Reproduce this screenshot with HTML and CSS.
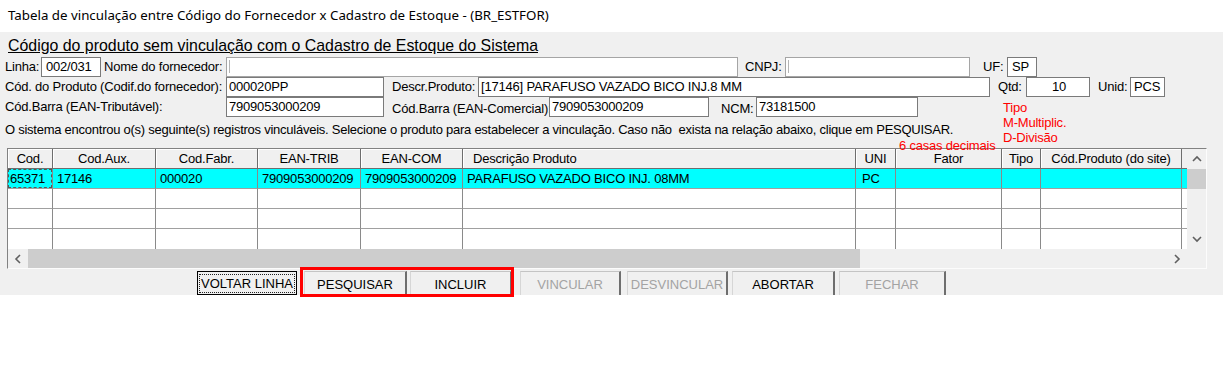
FILE: index.html
```html
<!DOCTYPE html>
<html lang="pt-BR">
<head>
    <meta charset="UTF-8">
    <title>BR_ESTFOR</title>
    <link rel="stylesheet" href="styles.css">
</head>
<body>
    <div class="titlebar">Tabela de vinculação entre Código do Fornecedor x Cadastro de Estoque - (BR_ESTFOR)</div>

    <div class="panel">
        <div class="heading">Código do produto sem vinculação com o Cadastro de Estoque do Sistema</div>

        <div class="form-row">
            <span class="lbl w-linha">Linha:</span>
            <span class="fld f-linha">002/031</span>
            <span class="lbl w-nome">Nome do fornecedor:</span>
            <span class="fld soft f-nome"><i class="caret"></i></span>
            <span class="lbl w-cnpj">CNPJ:</span>
            <span class="fld soft f-cnpj"><i class="caret"></i></span>
            <span class="lbl w-uf">UF:</span>
            <span class="fld f-uf">SP</span>
        </div>

        <div class="form-row">
            <span class="lbl w-first">Cód. do Produto (Codif.do fornecedor):</span>
            <span class="fld f-cod">000020PP</span>
            <span class="lbl w-descr">Descr.Produto:</span>
            <span class="fld f-descr">[17146] PARAFUSO VAZADO BICO INJ.8 MM</span>
            <span class="lbl w-qtd">Qtd:</span>
            <span class="fld f-qtd">10</span>
            <span class="lbl w-unid">Unid:</span>
            <span class="fld f-unid">PCS</span>
        </div>

        <div class="form-row">
            <span class="lbl w-first">Cód.Barra (EAN-Tributável):</span>
            <span class="fld f-cod">7909053000209</span>
            <span class="lbl w-eancom low">Cód.Barra (EAN-Comercial):</span>
            <span class="fld f-eancom">7909053000209</span>
            <span class="lbl w-ncm low">NCM:</span>
            <span class="fld f-ncm">73181500</span>
        </div>

        <p class="info">O sistema encontrou o(s) seguinte(s) registros vinculáveis. Selecione o produto para estabelecer a vinculação. Caso não&nbsp; exista na relação abaixo, clique em PESQUISAR.</p>

        <div class="note note-tipo">Tipo<br>M-Multiplic.<br>D-Divisão</div>
        <div class="note note-dec">6 casas decimais</div>

        <div class="grid-frame">
            <div class="grid-body">
                <div class="grid-table" id="grid">
                    <div class="hd">Cod.</div>
                    <div class="hd">Cod.Aux.</div>
                    <div class="hd">Cod.Fabr.</div>
                    <div class="hd">EAN-TRIB</div>
                    <div class="hd">EAN-COM</div>
                    <div class="hd left">Descrição Produto</div>
                    <div class="hd">UNI</div>
                    <div class="hd">Fator</div>
                    <div class="hd">Tipo</div>
                    <div class="hd">Cód.Produto (do site)</div>
                    <div class="hd end"></div>

                    <div class="cell sel first"><span class="focus">65371</span></div>
                    <div class="cell sel">17146</div>
                    <div class="cell sel">000020</div>
                    <div class="cell sel">7909053000209</div>
                    <div class="cell sel">7909053000209</div>
                    <div class="cell sel">PARAFUSO VAZADO BICO INJ. 08MM</div>
                    <div class="cell sel uni">PC</div>
                    <div class="cell sel"></div>
                    <div class="cell sel"></div>
                    <div class="cell sel"></div>
                    <div class="cell sel end"></div>

                    <div class="cell"></div><div class="cell"></div><div class="cell"></div><div class="cell"></div><div class="cell"></div><div class="cell"></div><div class="cell"></div><div class="cell"></div><div class="cell"></div><div class="cell"></div><div class="cell end"></div>
                    <div class="cell"></div><div class="cell"></div><div class="cell"></div><div class="cell"></div><div class="cell"></div><div class="cell"></div><div class="cell"></div><div class="cell"></div><div class="cell"></div><div class="cell"></div><div class="cell end"></div>
                    <div class="cell last"></div><div class="cell last"></div><div class="cell last"></div><div class="cell last"></div><div class="cell last"></div><div class="cell last"></div><div class="cell last"></div><div class="cell last"></div><div class="cell last"></div><div class="cell last"></div><div class="cell last end"></div>
                </div>
                <div class="vscroll">
                    <div class="sb-btn">
                        <svg width="10" height="8" viewBox="0 0 10 8"><polyline points="1,6 5,2 9,6" fill="none" stroke="#606060" stroke-width="1.6"/></svg>
                    </div>
                    <div class="v-thumb"></div>
                    <div class="v-track"></div>
                    <div class="sb-btn">
                        <svg width="10" height="8" viewBox="0 0 10 8"><polyline points="1,2 5,6 9,2" fill="none" stroke="#606060" stroke-width="1.6"/></svg>
                    </div>
                </div>
            </div>
            <div class="hscroll">
                <div class="sb-btn h">
                    <svg width="8" height="10" viewBox="0 0 8 10"><polyline points="6,1 2,5 6,9" fill="none" stroke="#606060" stroke-width="1.6"/></svg>
                </div>
                <div class="h-thumb"></div>
                <div class="h-track"></div>
                <div class="sb-btn h">
                    <svg width="8" height="10" viewBox="0 0 8 10"><polyline points="2,1 6,5 2,9" fill="none" stroke="#606060" stroke-width="1.6"/></svg>
                </div>
                <div class="corner"></div>
            </div>
        </div>

        <div class="buttons">
            <button class="btn default"><span class="focus-text">VOLTAR LINHA</span></button>
            <button class="btn b-pesq">PESQUISAR</button>
            <button class="btn b-incl">INCLUIR</button>
            <button class="btn b-vinc" disabled>VINCULAR</button>
            <button class="btn b-desv" disabled>DESVINCULAR</button>
            <button class="btn b-abor">ABORTAR</button>
            <button class="btn b-fech" disabled>FECHAR</button>
            <div class="highlight"></div>
        </div>
    </div>
</body>
</html>
```

FILE: styles.css
```css
* {
    box-sizing: border-box;
    margin: 0;
    padding: 0;
}

body {
    width: 1223px;
    height: 381px;
    overflow: hidden;
    background-color: #fff;
    color: #000;
    font-family: "Liberation Sans", Arial, sans-serif;
    font-size: 13px;
    letter-spacing: -0.2px;
}

.titlebar {
    height: 32px;
    padding-left: 8px;
    line-height: 30px;
    font-family: "Noto Sans", "Liberation Sans", sans-serif;
    font-size: 13.3px;
    letter-spacing: 0;
}

.panel {
    position: relative;
    height: 263px;
    padding-top: 4px;
    background-color: #f0f0f0;
}

.heading {
    height: 21px;
    padding-left: 8px;
    line-height: 19px;
    font-size: 15.9px;
    letter-spacing: 0;
    text-decoration: underline;
}

/* form rows */
.form-row {
    display: flex;
    align-items: center;
    height: 20px;
    padding-left: 5px;
}

.lbl {
    flex: none;
    white-space: nowrap;
    line-height: 20px;
}

.lbl.low {
    padding-top: 3px;
}

.fld {
    flex: none;
    height: 20px;
    padding-left: 2px;
    line-height: 18px;
    white-space: nowrap;
    overflow: hidden;
    background-color: #fff;
    border: 1px solid #7a7a7a;
}

.fld.soft {
    border-color: #a5a5a5;
}

.caret {
    display: inline-block;
    width: 1px;
    height: 13px;
    margin-top: 2px;
    vertical-align: top;
    background-color: #b4b4b4;
}

.w-linha { width: 36px; }
.f-linha { width: 60px; padding-left: 4px; }
.w-nome { width: 122px; margin-left: 3px; }
.f-nome { width: 512px; }
.w-cnpj { width: 40px; margin-left: 7px; }
.f-cnpj { width: 185px; }
.w-uf { width: 24px; margin-left: 13px; }
.f-uf { width: 30px; padding-left: 4px; }

.w-first { width: 221px; }
.f-cod { width: 158px; }
.w-descr { width: 86px; margin-left: 8px; }
.f-descr { width: 512px; }
.w-qtd { width: 28px; margin-left: 8px; }
.f-qtd { width: 64px; text-align: center; }
.w-unid { width: 32px; margin-left: 8px; }
.f-unid { width: 35px; padding-left: 3px; }

.w-eancom { width: 157px; margin-left: 8px; }
.f-eancom { width: 160px; }
.w-ncm { width: 35px; margin-left: 12px; }
.f-ncm { width: 162px; }

.info {
    height: 31px;
    padding: 5px 0 0 5px;
    line-height: 16px;
    letter-spacing: -0.25px;
    white-space: nowrap;
}

/* red notes over the form */
.note {
    position: absolute;
    color: #ff0000;
    line-height: 15px;
    white-space: nowrap;
}

.note-tipo {
    left: 1003px;
    top: 68px;
}

.note-dec {
    left: 899px;
    top: 106px;
}

/* grid */
.grid-frame {
    width: 1200px;
    height: 121px;
    margin-left: 7px;
    border: 1px solid;
    border-color: #828282 #fcfcfc #fcfcfc #828282;
}

.grid-body {
    display: flex;
    height: 100px;
}

.grid-table {
    display: grid;
    grid-template-columns: 45px 103px 102px 103px 102px 393px 40px 106px 39px 141px 5px;
    grid-template-rows: repeat(5, 20px);
    width: 1179px;
    background-color: #fff;
}

.hd {
    padding-top: 1px;
    line-height: 18px;
    text-align: center;
    white-space: nowrap;
    overflow: hidden;
    background-color: #f0f0f0;
    border-right: 1px solid #6d6d6d;
    border-bottom: 1px solid #6d6d6d;
    box-shadow: inset 1px 1px 0 #fff;
}

.hd.left {
    padding-left: 10px;
    text-align: left;
}

.hd.end {
    border-right: none;
    box-shadow: none;
}

.cell {
    padding-left: 4px;
    line-height: 19px;
    white-space: nowrap;
    overflow: hidden;
    border-right: 1px solid #8a8a8a;
    border-bottom: 1px solid #a0a0a0;
}

.cell.sel {
    background-color: #00ffff;
}

.cell.first {
    padding: 0;
}

.cell.uni {
    padding-left: 6px;
}

.cell.end {
    border-right: none;
}

.cell.last {
    border-bottom: none;
}

.focus {
    display: block;
    height: 19px;
    padding-left: 1px;
    border: 1px dashed #555;
    line-height: 17px;
}

.vscroll {
    display: flex;
    flex-direction: column;
    width: 19px;
    background-color: #f0f0f0;
}

.sb-btn {
    display: flex;
    align-items: center;
    justify-content: center;
    flex: none;
    height: 20px;
}

.sb-btn.h {
    width: 20px;
    height: 19px;
}

.v-thumb {
    height: 20px;
    background-color: #cdcdcd;
}

.v-track {
    flex: 1;
}

.hscroll {
    display: flex;
    height: 19px;
    background-color: #f0f0f0;
}

.h-thumb {
    width: 832px;
    background-color: #cdcdcd;
}

.h-track {
    flex: 1;
}

.corner {
    width: 19px;
}

/* buttons */
.buttons {
    position: relative;
    display: flex;
    height: 24px;
    margin-top: 2px;
    padding-left: 197px;
}

.btn {
    flex: none;
    width: 103px;
    height: 24px;
    padding-top: 3px;
    font: inherit;
    line-height: 20px;
    white-space: nowrap;
    color: #000;
    background-color: #f0f0f0;
    border: none;
    border-top: 1px solid #c4c4c4;
    border-left: 1px solid #d6d6d6;
    border-right: 2px solid #6e6e6e;
}

.btn:disabled {
    color: #a3a3a3;
}

.btn.default {
    width: 100px;
    padding-top: 2px;
    border: 1px solid #000;
}

.b-pesq { margin-left: 7px; }
.b-incl { margin-left: 3px; width: 102px; }
.b-vinc { margin-left: 8px; width: 101px; }
.b-desv { margin-left: 6px; width: 101px; }
.b-abor { margin-left: 4px; }
.b-fech { margin-left: 4px; width: 107px; }

.focus-text {
    display: inline-block;
    padding: 0 1px;
    line-height: 17px;
    border: 1px dotted #222;
}

.highlight {
    position: absolute;
    left: 300px;
    top: -4px;
    width: 214px;
    height: 30px;
    border: 3px solid #ff0000;
}
```
